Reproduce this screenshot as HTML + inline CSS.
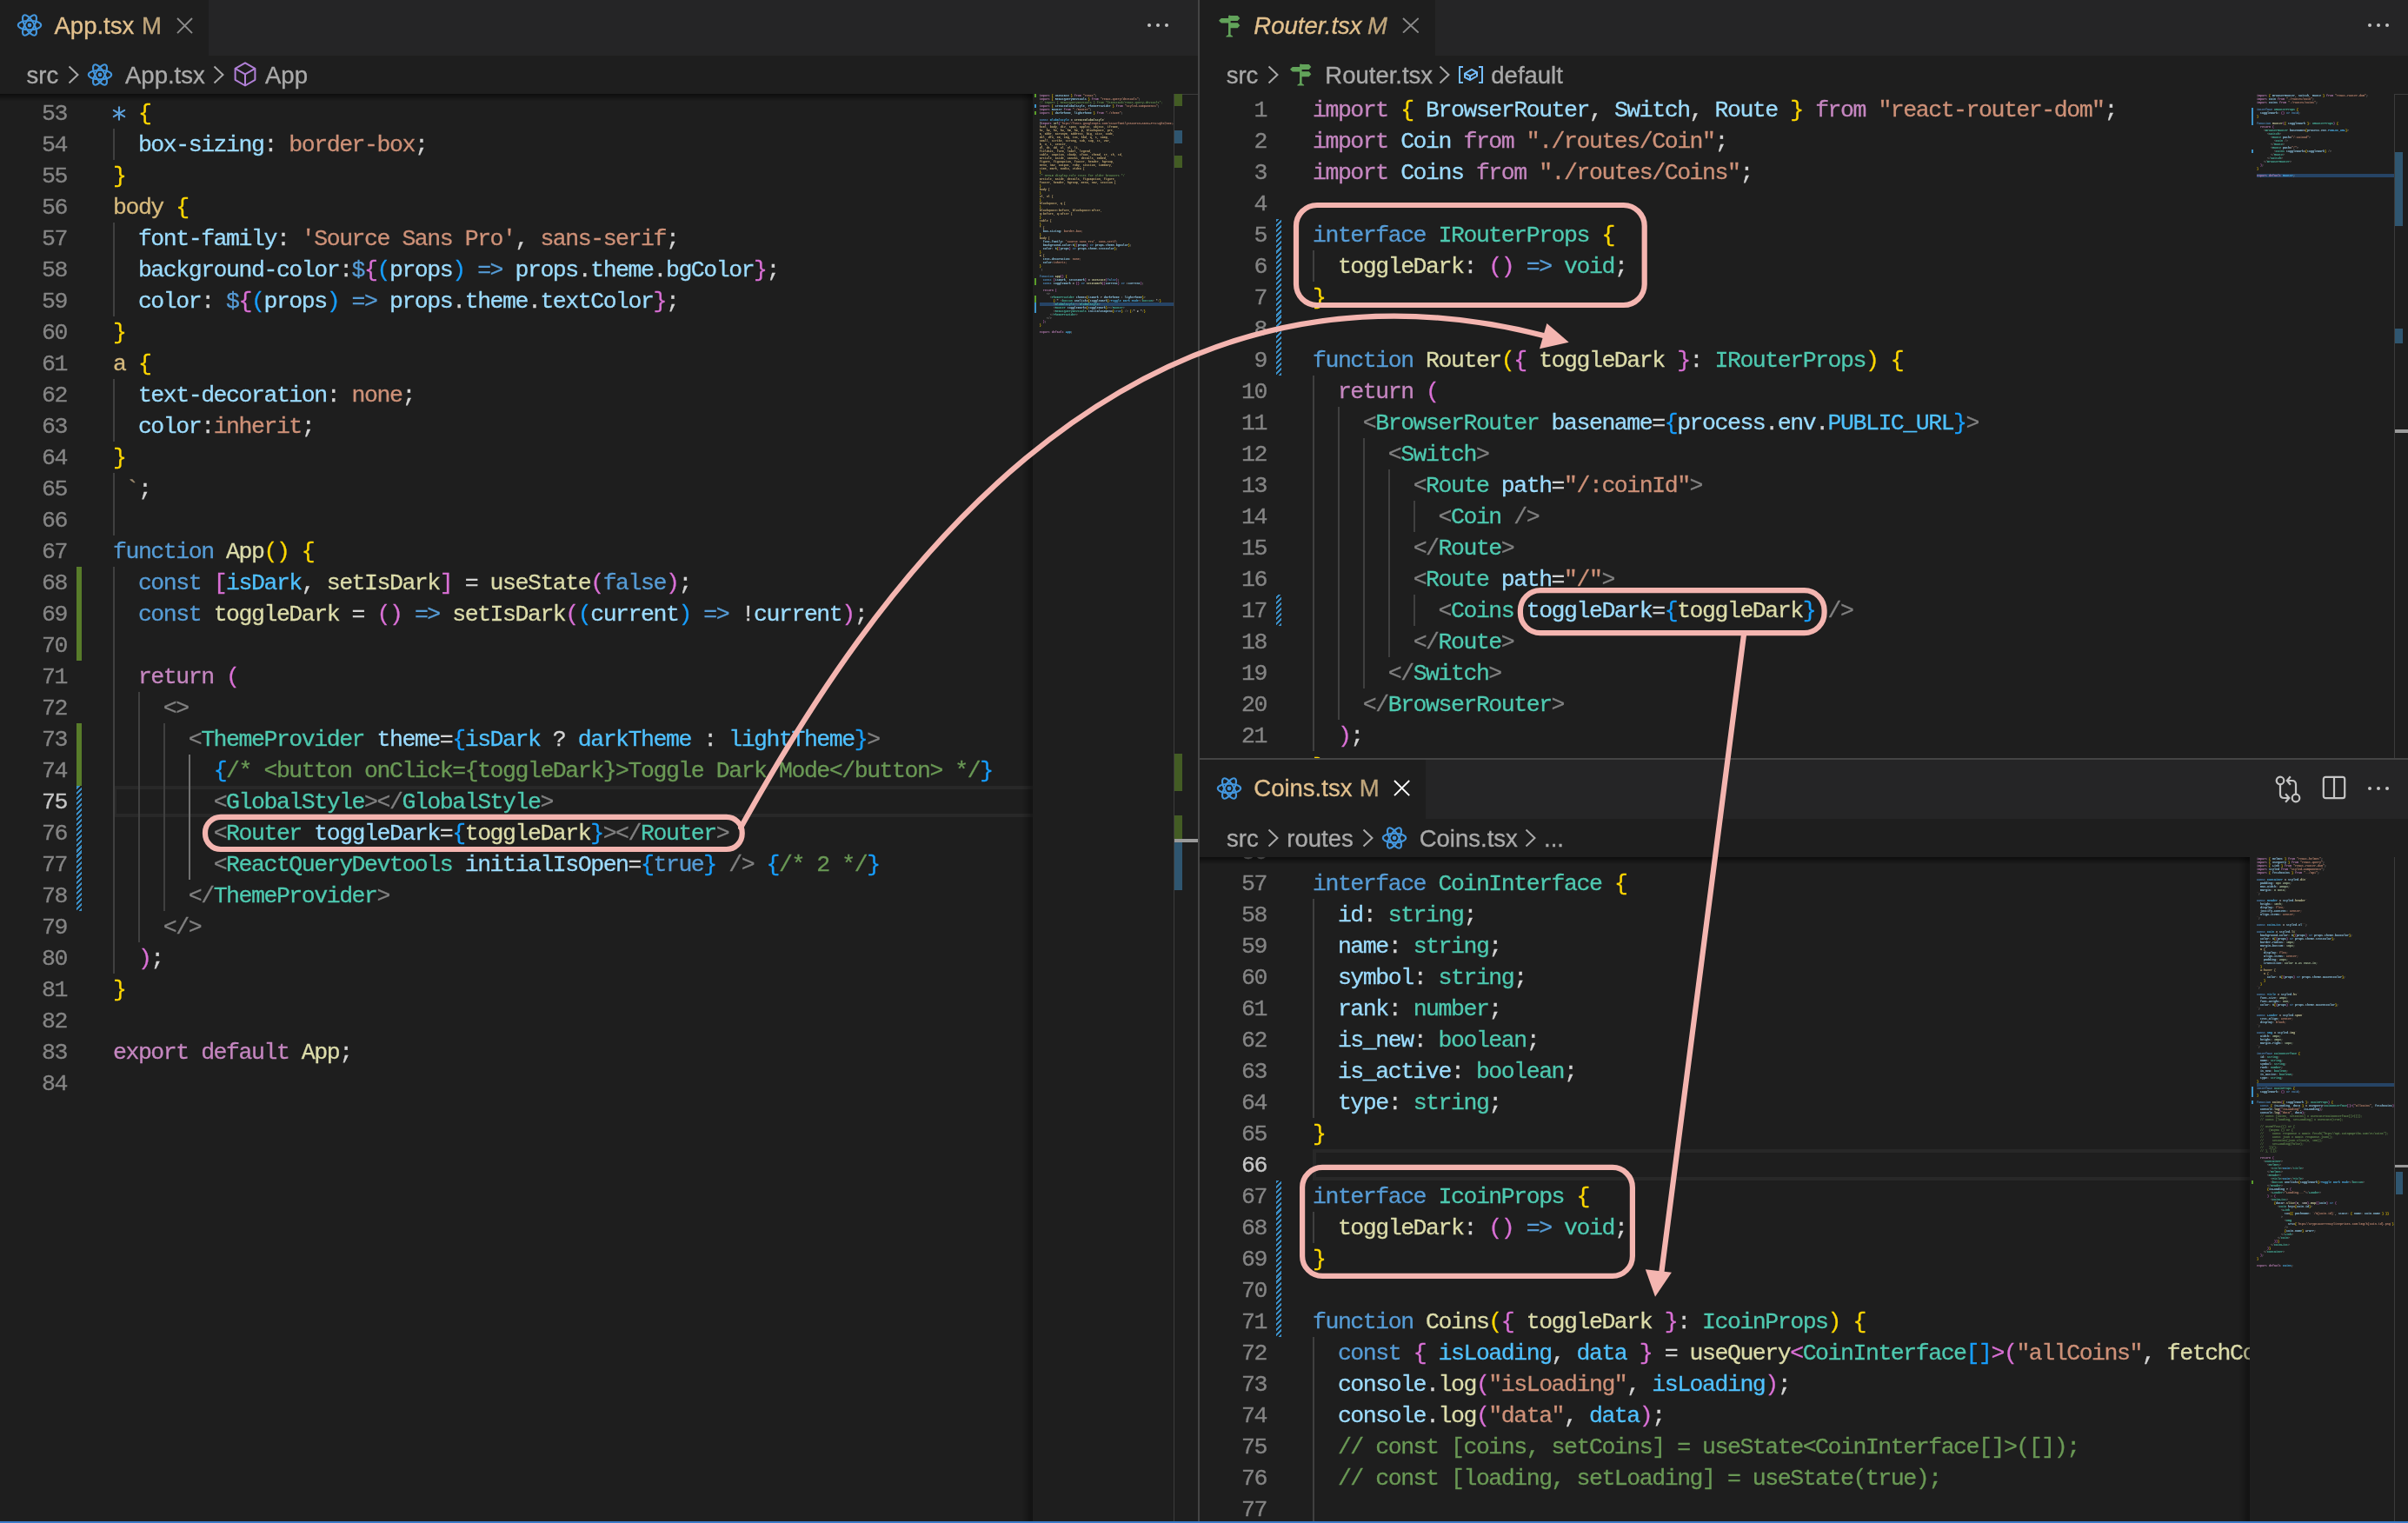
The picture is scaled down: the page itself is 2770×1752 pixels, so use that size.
<!DOCTYPE html><html><head><meta charset="utf-8"><style>
*{margin:0;padding:0;box-sizing:border-box}
html,body{width:2770px;height:1752px;overflow:hidden;background:#1e1e1e}
#root{position:absolute;left:0;top:0;width:2770px;height:1752px;will-change:transform}
body{position:relative;font-family:"Liberation Sans",sans-serif}
.a{position:absolute}
.code{position:absolute;white-space:pre;font-family:"Liberation Mono",monospace;font-size:26.5px;letter-spacing:-1.450px;line-height:36px;height:36px;color:#D4D4D4;margin-top:1px;-webkit-text-stroke:0.3px currentColor}
.num{position:absolute;white-space:pre;font-family:"Liberation Mono",monospace;font-size:26.5px;letter-spacing:-1.450px;line-height:36px;height:36px;color:#858585;text-align:right;width:60px;margin-top:1px;-webkit-text-stroke:0.3px currentColor}
.num.cur{color:#C6C6C6}
i{font-style:normal}
.K{color:#C586C0}.S{color:#569CD6}.F{color:#DCDCAA}.V{color:#9CDCFE}.C{color:#4FC1FF}.T{color:#4EC9B0}
.Q{color:#CE9178}.P{color:#D4D4D4}.G{color:#808080}.M{color:#6A9955}.Y{color:#FFD700}.O{color:#DA70D6}
.B{color:#179FFF}.L{color:#D7BA7D}.W{color:#5DA0DB}.D{color:#9C8A6E}.N{color:#B5CEA8}
.guide{position:absolute;width:2px;background:#404040}
.guide.act{background:#707070}
.hatch{position:absolute;width:6px;background:repeating-linear-gradient(-45deg,#3B8DC4 0 2.2px,rgba(0,0,0,0) 2.2px 4.3px)}
.added{position:absolute;width:6px;background:#587C2A}
.ui{position:absolute;white-space:pre;font-family:"Liberation Sans",sans-serif;font-size:26px;line-height:30px;-webkit-text-stroke:0.35px currentColor}
.crumb{color:#A9A9A9}
.mm{position:absolute;white-space:pre;font-family:"Liberation Mono",monospace;font-size:3.34px;line-height:4px;letter-spacing:0px;font-weight:bold;transform:scaleY(1.2);transform-origin:0 2px;opacity:0.9}
.ast{display:inline-block;transform:translateY(10.5px) scale(1.4)}
.gm{font-weight:bold}
</style></head><body><div id="root"><div class="a" style="left:0px;top:0px;width:1378px;height:64px;background:#252526;"></div>
<div class="a" style="left:0px;top:0px;width:240px;height:64px;background:#1E1E1E;"></div>
<svg class="a" style="left:18px;top:13px" width="32" height="32" viewBox="-16 -16 32 32"><g fill="none" stroke="#4396DD" stroke-width="2.1"><ellipse cx="0" cy="0" rx="13.2" ry="5.2"/><ellipse cx="0" cy="0" rx="13.2" ry="5.2" transform="rotate(60)"/><ellipse cx="0" cy="0" rx="13.2" ry="5.2" transform="rotate(120)"/></g><circle cx="0" cy="0" r="2.4" fill="#4396DD"/></svg>
<div class="ui" style="left:62.5px;top:12.9113px;font-size:27.5px;line-height:34px;color:#E2C08D;">App.tsx</div>
<div class="ui" style="left:163px;top:12.9113px;font-size:27.5px;line-height:34px;color:#BFA57B;">M</div>
<svg class="a" style="left:203px;top:19.5px" width="19" height="19.1"><path d="M1 1 L18 18.1 M18 1 L1 18.1" stroke="#8B8B8B" stroke-width="1.9" fill="none"/></svg>
<div class="a" style="left:1319.8px;top:26.8px;width:4.4px;height:4.4px;border-radius:50%;background:#C5C5C5"></div><div class="a" style="left:1329.8px;top:26.8px;width:4.4px;height:4.4px;border-radius:50%;background:#C5C5C5"></div><div class="a" style="left:1339.8px;top:26.8px;width:4.4px;height:4.4px;border-radius:50%;background:#C5C5C5"></div>
<div class="a" style="left:0px;top:64px;width:1378px;height:44px;background:#1E1E1E;"></div>
<div class="ui" style="left:30.5px;top:69.9112px;font-size:27.5px;line-height:34px;color:#A9A9A9;">src</div>
<svg class="a" style="left:77.5px;top:75.4px" width="14" height="22" viewBox="0 0 14 22"><path d="M1.5 1.5 L11.5 11 L1.5 20.5" fill="none" stroke="#A9A9A9" stroke-width="2"/></svg>
<svg class="a" style="left:99px;top:70px" width="32" height="32" viewBox="-16 -16 32 32"><g fill="none" stroke="#4396DD" stroke-width="2.1"><ellipse cx="0" cy="0" rx="13.2" ry="5.2"/><ellipse cx="0" cy="0" rx="13.2" ry="5.2" transform="rotate(60)"/><ellipse cx="0" cy="0" rx="13.2" ry="5.2" transform="rotate(120)"/></g><circle cx="0" cy="0" r="2.4" fill="#4396DD"/></svg>
<div class="ui" style="left:144px;top:69.9112px;font-size:27.5px;line-height:34px;color:#A9A9A9;">App.tsx</div>
<svg class="a" style="left:245px;top:75.4px" width="14" height="22" viewBox="0 0 14 22"><path d="M1.5 1.5 L11.5 11 L1.5 20.5" fill="none" stroke="#A9A9A9" stroke-width="2"/></svg>
<svg class="a" style="left:269.4px;top:71.1px" width="26" height="29" viewBox="0 0 26 29"><g fill="none" stroke="#B180D7" stroke-width="2" stroke-linejoin="round"><path d="M13 1.3 L24.4 7.8 L24.4 20.8 L13 27.5 L1.6 20.8 L1.6 7.8 Z"/><path d="M1.6 7.8 L13 14.3 L24.4 7.8 M13 14.3 L13 27.5"/></g></svg>
<div class="ui" style="left:305px;top:69.9112px;font-size:27.5px;line-height:34px;color:#A9A9A9;">App</div>
<div class="a" style="left:0px;top:108px;width:1188px;height:1642px;overflow:hidden">
<div class="a" style="left:130px;top:796px;width:1062px;height:36px;border:4px solid #282828"></div>
<div class="added" style="left:88px;top:544px;height:108px"></div>
<div class="added" style="left:88px;top:724px;height:72px"></div>
<div class="hatch" style="left:88px;top:796px;height:144px"></div>
<div class="guide" style="left:130px;top:40px;height:36px"></div>
<div class="guide" style="left:130px;top:148px;height:36px"></div>
<div class="guide" style="left:130px;top:184px;height:36px"></div>
<div class="guide" style="left:130px;top:220px;height:36px"></div>
<div class="guide" style="left:130px;top:328px;height:36px"></div>
<div class="guide" style="left:130px;top:364px;height:36px"></div>
<div class="guide" style="left:130px;top:436px;height:36px"></div>
<div class="guide" style="left:130px;top:472px;height:36px"></div>
<div class="guide" style="left:130px;top:544px;height:36px"></div>
<div class="guide" style="left:130px;top:580px;height:36px"></div>
<div class="guide" style="left:130px;top:616px;height:36px"></div>
<div class="guide" style="left:130px;top:652px;height:36px"></div>
<div class="guide" style="left:130px;top:688px;height:36px"></div>
<div class="guide" style="left:158.9px;top:688px;height:36px"></div>
<div class="guide" style="left:130px;top:724px;height:36px"></div>
<div class="guide" style="left:158.9px;top:724px;height:36px"></div>
<div class="guide" style="left:187.8px;top:724px;height:36px"></div>
<div class="guide" style="left:130px;top:760px;height:36px"></div>
<div class="guide" style="left:158.9px;top:760px;height:36px"></div>
<div class="guide" style="left:187.8px;top:760px;height:36px"></div>
<div class="guide act" style="left:216.7px;top:760px;height:36px"></div>
<div class="guide" style="left:130px;top:796px;height:36px"></div>
<div class="guide" style="left:158.9px;top:796px;height:36px"></div>
<div class="guide" style="left:187.8px;top:796px;height:36px"></div>
<div class="guide act" style="left:216.7px;top:796px;height:36px"></div>
<div class="guide" style="left:130px;top:832px;height:36px"></div>
<div class="guide" style="left:158.9px;top:832px;height:36px"></div>
<div class="guide" style="left:187.8px;top:832px;height:36px"></div>
<div class="guide act" style="left:216.7px;top:832px;height:36px"></div>
<div class="guide" style="left:130px;top:868px;height:36px"></div>
<div class="guide" style="left:158.9px;top:868px;height:36px"></div>
<div class="guide" style="left:187.8px;top:868px;height:36px"></div>
<div class="guide act" style="left:216.7px;top:868px;height:36px"></div>
<div class="guide" style="left:130px;top:904px;height:36px"></div>
<div class="guide" style="left:158.9px;top:904px;height:36px"></div>
<div class="guide" style="left:187.8px;top:904px;height:36px"></div>
<div class="guide" style="left:130px;top:940px;height:36px"></div>
<div class="guide" style="left:158.9px;top:940px;height:36px"></div>
<div class="guide" style="left:130px;top:976px;height:36px"></div>
<div class="num" style="left:17px;top:4px">53</div>
<div class="code" style="left:130px;top:4px"><i class="P">  </i><i class="Y">{</i></div>
<div class="num" style="left:17px;top:40px">54</div>
<div class="code" style="left:130px;top:40px">  <i class="V">box-sizing</i><i class="P">: </i><i class="Q">border-box</i><i class="P">;</i></div>
<div class="num" style="left:17px;top:76px">55</div>
<div class="code" style="left:130px;top:76px"><i class="Y">}</i></div>
<div class="num" style="left:17px;top:112px">56</div>
<div class="code" style="left:130px;top:112px"><i class="L">body</i><i class="P"> </i><i class="Y">{</i></div>
<div class="num" style="left:17px;top:148px">57</div>
<div class="code" style="left:130px;top:148px">  <i class="V">font-family</i><i class="P">: </i><i class="Q">&#x27;Source Sans Pro&#x27;</i><i class="P">, </i><i class="Q">sans-serif</i><i class="P">;</i></div>
<div class="num" style="left:17px;top:184px">58</div>
<div class="code" style="left:130px;top:184px">  <i class="V">background-color</i><i class="P">:</i><i class="S">$</i><i class="O">{</i><i class="B">(</i><i class="V">props</i><i class="B">)</i><i class="P"> </i><i class="S">=&gt;</i><i class="P"> </i><i class="V">props</i><i class="P">.</i><i class="V">theme</i><i class="P">.</i><i class="V">bgColor</i><i class="O">}</i><i class="P">;</i></div>
<div class="num" style="left:17px;top:220px">59</div>
<div class="code" style="left:130px;top:220px">  <i class="V">color</i><i class="P">: </i><i class="S">$</i><i class="O">{</i><i class="B">(</i><i class="V">props</i><i class="B">)</i><i class="P"> </i><i class="S">=&gt;</i><i class="P"> </i><i class="V">props</i><i class="P">.</i><i class="V">theme</i><i class="P">.</i><i class="V">textColor</i><i class="O">}</i><i class="P">;</i></div>
<div class="num" style="left:17px;top:256px">60</div>
<div class="code" style="left:130px;top:256px"><i class="Y">}</i></div>
<div class="num" style="left:17px;top:292px">61</div>
<div class="code" style="left:130px;top:292px"><i class="L">a</i><i class="P"> </i><i class="Y">{</i></div>
<div class="num" style="left:17px;top:328px">62</div>
<div class="code" style="left:130px;top:328px">  <i class="V">text-decoration</i><i class="P">: </i><i class="Q">none</i><i class="P">;</i></div>
<div class="num" style="left:17px;top:364px">63</div>
<div class="code" style="left:130px;top:364px">  <i class="V">color</i><i class="P">:</i><i class="Q">inherit</i><i class="P">;</i></div>
<div class="num" style="left:17px;top:400px">64</div>
<div class="code" style="left:130px;top:400px"><i class="Y">}</i></div>
<div class="num" style="left:17px;top:436px">65</div>
<div class="code" style="left:130px;top:436px"> <i class="D">`</i><i class="P">;</i></div>
<div class="num" style="left:17px;top:472px">66</div>
<div class="num" style="left:17px;top:508px">67</div>
<div class="code" style="left:130px;top:508px"><i class="S">function</i><i class="P"> </i><i class="F">App</i><i class="Y">()</i><i class="P"> </i><i class="Y">{</i></div>
<div class="num" style="left:17px;top:544px">68</div>
<div class="code" style="left:130px;top:544px">  <i class="S">const</i><i class="P"> </i><i class="O">[</i><i class="C">isDark</i><i class="P">, </i><i class="F">setIsDark</i><i class="O">]</i><i class="P"> = </i><i class="F">useState</i><i class="O">(</i><i class="S">false</i><i class="O">)</i><i class="P">;</i></div>
<div class="num" style="left:17px;top:580px">69</div>
<div class="code" style="left:130px;top:580px">  <i class="S">const</i><i class="P"> </i><i class="F">toggleDark</i><i class="P"> = </i><i class="O">()</i><i class="P"> </i><i class="S">=&gt;</i><i class="P"> </i><i class="F">setIsDark</i><i class="O">(</i><i class="B">(</i><i class="V">current</i><i class="B">)</i><i class="P"> </i><i class="S">=&gt;</i><i class="P"> !</i><i class="V">current</i><i class="O">)</i><i class="P">;</i></div>
<div class="num" style="left:17px;top:616px">70</div>
<div class="num" style="left:17px;top:652px">71</div>
<div class="code" style="left:130px;top:652px">  <i class="K">return</i><i class="P"> </i><i class="O">(</i></div>
<div class="num" style="left:17px;top:688px">72</div>
<div class="code" style="left:130px;top:688px">    <i class="G">&lt;&gt;</i></div>
<div class="num" style="left:17px;top:724px">73</div>
<div class="code" style="left:130px;top:724px">      <i class="G">&lt;</i><i class="T">ThemeProvider</i><i class="P"> </i><i class="V">theme</i><i class="P">=</i><i class="B">{</i><i class="C">isDark</i><i class="P"> ? </i><i class="C">darkTheme</i><i class="P"> : </i><i class="C">lightTheme</i><i class="B">}</i><i class="G">&gt;</i></div>
<div class="num" style="left:17px;top:760px">74</div>
<div class="code" style="left:130px;top:760px">        <i class="B">{</i><i class="M">/* &lt;button onClick={toggleDark}&gt;Toggle Dark Mode&lt;/button&gt; */</i><i class="B">}</i></div>
<div class="num cur" style="left:17px;top:796px">75</div>
<div class="code" style="left:130px;top:796px">        <i class="G">&lt;</i><i class="T">GlobalStyle</i><i class="G">&gt;&lt;/</i><i class="T">GlobalStyle</i><i class="G">&gt;</i></div>
<div class="num" style="left:17px;top:832px">76</div>
<div class="code" style="left:130px;top:832px">        <i class="G">&lt;</i><i class="T">Router</i><i class="P"> </i><i class="V">toggleDark</i><i class="P">=</i><i class="B">{</i><i class="F">toggleDark</i><i class="B">}</i><i class="G">&gt;&lt;/</i><i class="T">Router</i><i class="G">&gt;</i></div>
<div class="num" style="left:17px;top:868px">77</div>
<div class="code" style="left:130px;top:868px">        <i class="G">&lt;</i><i class="T">ReactQueryDevtools</i><i class="P"> </i><i class="V">initialIsOpen</i><i class="P">=</i><i class="B">{</i><i class="S">true</i><i class="B">}</i><i class="P"> </i><i class="G">/&gt;</i><i class="P"> </i><i class="B">{</i><i class="M">/* 2 */</i><i class="B">}</i></div>
<div class="num" style="left:17px;top:904px">78</div>
<div class="code" style="left:130px;top:904px">      <i class="G">&lt;/</i><i class="T">ThemeProvider</i><i class="G">&gt;</i></div>
<div class="num" style="left:17px;top:940px">79</div>
<div class="code" style="left:130px;top:940px">    <i class="G">&lt;/&gt;</i></div>
<div class="num" style="left:17px;top:976px">80</div>
<div class="code" style="left:130px;top:976px">  <i class="O">)</i><i class="P">;</i></div>
<div class="num" style="left:17px;top:1012px">81</div>
<div class="code" style="left:130px;top:1012px"><i class="Y">}</i></div>
<div class="num" style="left:17px;top:1048px">82</div>
<div class="num" style="left:17px;top:1084px">83</div>
<div class="code" style="left:130px;top:1084px"><i class="K">export</i><i class="P"> </i><i class="K">default</i><i class="P"> </i><i class="F">App</i><i class="P">;</i></div>
<div class="num" style="left:17px;top:1120px">84</div>
</div>
<svg class="a" style="left:128px;top:121px" width="18" height="19" viewBox="0 0 18 19"><g stroke="#5DA0DB" stroke-width="2.1" stroke-linecap="round"><path d="M9 2.3 L9 16.7"/><path d="M2.8 5.8 L15.2 13.2"/><path d="M2.8 13.2 L15.2 5.8"/></g></svg>
<div class="a" style="left:0px;top:108px;width:1188px;height:8px;background:linear-gradient(rgba(0,0,0,0.55),rgba(0,0,0,0));"></div>
<div class="a" style="left:1176px;top:108px;width:12px;height:1642px;background:linear-gradient(90deg,rgba(0,0,0,0),rgba(0,0,0,0.38));"></div>
<div class="a" style="left:1196px;top:348px;width:154px;height:4px;background:#264466;"></div>
<div class="a" style="left:1190px;top:108px;width:2.3px;height:4px;background:#5A9E2A;"></div>
<div class="a" style="left:1190px;top:120px;width:2.3px;height:4px;background:#3C93C9;"></div>
<div class="a" style="left:1190px;top:128px;width:2.3px;height:4px;background:#5A9E2A;"></div>
<div class="a" style="left:1190px;top:320px;width:2.3px;height:8px;background:#5A9E2A;"></div>
<div class="a" style="left:1190px;top:340px;width:2.3px;height:8px;background:#5A9E2A;"></div>
<div class="a" style="left:1190px;top:348px;width:2.3px;height:12px;background:#3C93C9;"></div>
<div class="a" style="left:1195.8px;top:108px;width:154px;height:278px;overflow:hidden">
<div class="mm" style="left:0;top:0px"><i class="K">import </i><i class="Y">{ </i><i class="V">useState </i><i class="Y">} </i><i class="K">from </i><i class="Q">&quot;react&quot;</i><i class="P">;</i></div>
<div class="mm" style="left:0;top:4px"><i class="K">import </i><i class="Y">{ </i><i class="V">ReactQueryDevtools </i><i class="Y">} </i><i class="K">from </i><i class="Q">&quot;react-query/devtools&quot;</i><i class="P">;</i></div>
<div class="mm" style="left:0;top:8px"><i class="M">// import { ReactQueryDevtools } from &quot;@tanstack/react-query-devtools&quot;;</i></div>
<div class="mm" style="left:0;top:12px"><i class="K">import </i><i class="Y">{ </i><i class="V">createGlobalStyle</i><i class="P">, </i><i class="V">ThemeProvider </i><i class="Y">} </i><i class="K">from </i><i class="Q">&quot;styled-components&quot;</i><i class="P">;</i></div>
<div class="mm" style="left:0;top:16px"><i class="K">import </i><i class="V">Router </i><i class="K">from </i><i class="Q">&quot;./Router&quot;</i><i class="P">;</i></div>
<div class="mm" style="left:0;top:20px"><i class="K">import </i><i class="Y">{ </i><i class="V">darkTheme</i><i class="P">, </i><i class="V">lightTheme </i><i class="Y">} </i><i class="K">from </i><i class="Q">&quot;./theme&quot;</i><i class="P">;</i></div>
<div class="mm" style="left:0;top:28px"><i class="S">const </i><i class="C">GlobalStyle </i><i class="P">= </i><i class="F">createGlobalStyle</i><i class="Q">`</i></div>
<div class="mm" style="left:0;top:32px"><i class="P">@</i><i class="K">import </i><i class="F">url</i><i class="O">(</i><i class="Q">&#x27;htps//fonts.googleapis.com/css2?family=Source+Sans+Pro:wght@300;400&amp;display=swap&#x27;</i><i class="O">)</i><i class="P">;</i></div>
<div class="mm" style="left:0;top:36px"><i class="L">html, body, div, span, applet, object, iframe,</i></div>
<div class="mm" style="left:0;top:40px"><i class="L">h1, h2, h3, h4, h5, h6, p, blockquote, pre,</i></div>
<div class="mm" style="left:0;top:44px"><i class="L">a, abbr, acronym, address, big, cite, code,</i></div>
<div class="mm" style="left:0;top:48px"><i class="L">del, dfn, em, img, ins, kbd, q, s, samp,</i></div>
<div class="mm" style="left:0;top:52px"><i class="L">small, strike, strong, sub, sup, tt, var,</i></div>
<div class="mm" style="left:0;top:56px"><i class="L">b, u, i, center,</i></div>
<div class="mm" style="left:0;top:60px"><i class="L">dl, dt, dd, ol, ul, li,</i></div>
<div class="mm" style="left:0;top:64px"><i class="L">fieldset, form, label, legend,</i></div>
<div class="mm" style="left:0;top:68px"><i class="L">table, caption, tbody, tfoot, thead, tr, th, td,</i></div>
<div class="mm" style="left:0;top:72px"><i class="L">article, aside, canvas, details, embed,</i></div>
<div class="mm" style="left:0;top:76px"><i class="L">figure, figcaption, footer, header, hgroup,</i></div>
<div class="mm" style="left:0;top:80px"><i class="L">menu, nav, output, ruby, section, summary,</i></div>
<div class="mm" style="left:0;top:84px"><i class="L">time, mark, audio, video {</i></div>
<div class="mm" style="left:0;top:88px"><i class="Y">}</i></div>
<div class="mm" style="left:0;top:92px"><i class="M">/* HTML5 display-role reset for older browsers */</i></div>
<div class="mm" style="left:0;top:96px"><i class="L">article, aside, details, figcaption, figure,</i></div>
<div class="mm" style="left:0;top:100px"><i class="L">footer, header, hgroup, menu, nav, section {</i></div>
<div class="mm" style="left:0;top:104px"><i class="Y">}</i></div>
<div class="mm" style="left:0;top:108px"><i class="L">body {</i></div>
<div class="mm" style="left:0;top:112px"><i class="Y">}</i></div>
<div class="mm" style="left:0;top:116px"><i class="L">ol, ul {</i></div>
<div class="mm" style="left:0;top:120px"><i class="Y">}</i></div>
<div class="mm" style="left:0;top:124px"><i class="L">blockquote, q {</i></div>
<div class="mm" style="left:0;top:128px"><i class="Y">}</i></div>
<div class="mm" style="left:0;top:132px"><i class="L">blockquote:before, blockquote:after,</i></div>
<div class="mm" style="left:0;top:136px"><i class="L">q:before, q:after {</i></div>
<div class="mm" style="left:0;top:140px"><i class="Y">}</i></div>
<div class="mm" style="left:0;top:144px"><i class="L">table {</i></div>
<div class="mm" style="left:0;top:148px"><i class="Y">}</i></div>
<div class="mm" style="left:0;top:152px"><i class="L">* {</i></div>
<div class="mm" style="left:0;top:156px">  <i class="V">box-sizing</i><i class="P">:</i><i class="Q"> border-box;</i></div>
<div class="mm" style="left:0;top:160px"><i class="Y">}</i></div>
<div class="mm" style="left:0;top:164px"><i class="L">body {</i></div>
<div class="mm" style="left:0;top:168px">  <i class="V">font-family</i><i class="P">:</i><i class="Q"> &#x27;Source Sans Pro&#x27;, sans-serif;</i></div>
<div class="mm" style="left:0;top:172px">  <i class="V">background-color</i><i class="P">:</i><i class="V">$</i><i class="Y">{</i><i class="O">(</i><i class="V">props</i><i class="O">) </i><i class="S">=&gt; </i><i class="V">props</i><i class="P">.</i><i class="V">theme</i><i class="P">.</i><i class="V">bgColor</i><i class="Y">}</i><i class="P">;</i></div>
<div class="mm" style="left:0;top:176px">  <i class="V">color</i><i class="P">: </i><i class="V">$</i><i class="Y">{</i><i class="O">(</i><i class="V">props</i><i class="O">) </i><i class="S">=&gt; </i><i class="V">props</i><i class="P">.</i><i class="V">theme</i><i class="P">.</i><i class="V">textColor</i><i class="Y">}</i><i class="P">;</i></div>
<div class="mm" style="left:0;top:180px"><i class="Y">}</i></div>
<div class="mm" style="left:0;top:184px"><i class="L">a {</i></div>
<div class="mm" style="left:0;top:188px">  <i class="V">text-decoration</i><i class="P">:</i><i class="Q"> none;</i></div>
<div class="mm" style="left:0;top:192px">  <i class="V">color</i><i class="P">:</i><i class="Q">inherit;</i></div>
<div class="mm" style="left:0;top:196px"><i class="Y">}</i></div>
<div class="mm" style="left:0;top:200px"><i class="Q">`</i><i class="P">;</i></div>
<div class="mm" style="left:0;top:208px"><i class="S">function </i><i class="F">App</i><i class="O">(</i><i class="O">) </i><i class="Y">{</i></div>
<div class="mm" style="left:0;top:212px">  <i class="S">const </i><i class="O">[</i><i class="V">isDark</i><i class="P">, </i><i class="V">setIsDark</i><i class="O">] </i><i class="P">= </i><i class="F">useState</i><i class="O">(</i><i class="S">false</i><i class="O">)</i><i class="P">;</i></div>
<div class="mm" style="left:0;top:216px">  <i class="S">const </i><i class="V">toggleDark </i><i class="P">= </i><i class="O">(</i><i class="O">) </i><i class="S">=&gt; </i><i class="F">setIsDark</i><i class="O">(</i><i class="O">(</i><i class="V">current</i><i class="O">) </i><i class="S">=&gt; </i><i class="P">!</i><i class="V">current</i><i class="O">)</i><i class="P">;</i></div>
<div class="mm" style="left:0;top:224px">  <i class="K">return </i><i class="O">(</i></div>
<div class="mm" style="left:0;top:228px">    <i class="G">&lt;</i><i class="G">&gt;</i></div>
<div class="mm" style="left:0;top:232px">      <i class="G">&lt;</i><i class="T">ThemeProvider </i><i class="V">theme</i><i class="P">=</i><i class="Y">{</i><i class="V">isDark </i><i class="P">? </i><i class="V">darkTheme </i><i class="P">: </i><i class="V">lightTheme</i><i class="Y">}</i><i class="G">&gt;</i></div>
<div class="mm" style="left:0;top:236px">        <i class="Y">{</i><i class="G">/</i><i class="P">* </i><i class="G">&lt;</i><i class="T">button </i><i class="V">onClick</i><i class="P">=</i><i class="Y">{</i><i class="V">toggleDark</i><i class="Y">}</i><i class="G">&gt;</i><i class="C">Toggle </i><i class="C">Dark </i><i class="C">Mode</i><i class="G">&lt;</i><i class="G">/</i><i class="T">button</i><i class="G">&gt; </i><i class="P">*</i><i class="G">/</i><i class="Y">}</i></div>
<div class="mm" style="left:0;top:240px">        <i class="G">&lt;</i><i class="T">GlobalStyle</i><i class="G">&gt;</i><i class="G">&lt;</i><i class="G">/</i><i class="T">GlobalStyle</i><i class="G">&gt;</i></div>
<div class="mm" style="left:0;top:244px">        <i class="G">&lt;</i><i class="T">Router </i><i class="V">toggleDark</i><i class="P">=</i><i class="Y">{</i><i class="V">toggleDark</i><i class="Y">}</i><i class="G">&gt;</i><i class="G">&lt;</i><i class="G">/</i><i class="T">Router</i><i class="G">&gt;</i></div>
<div class="mm" style="left:0;top:248px">        <i class="G">&lt;</i><i class="T">ReactQueryDevtools </i><i class="V">initialIsOpen</i><i class="P">=</i><i class="Y">{</i><i class="S">true</i><i class="Y">} </i><i class="G">/</i><i class="G">&gt; </i><i class="Y">{</i><i class="G">/</i><i class="P">* </i><i class="P">2 </i><i class="P">*</i><i class="G">/</i><i class="Y">}</i></div>
<div class="mm" style="left:0;top:252px">      <i class="G">&lt;</i><i class="G">/</i><i class="T">ThemeProvider</i><i class="G">&gt;</i></div>
<div class="mm" style="left:0;top:256px">    <i class="G">&lt;</i><i class="G">/</i><i class="G">&gt;</i></div>
<div class="mm" style="left:0;top:260px">  <i class="O">)</i><i class="P">;</i></div>
<div class="mm" style="left:0;top:264px"><i class="Y">}</i></div>
<div class="mm" style="left:0;top:272px"><i class="K">export </i><i class="K">default </i><i class="C">App</i><i class="P">;</i></div>
</div>
<div class="a" style="left:1350px;top:108px;width:1px;height:1642px;background:#3C3C3C;"></div>
<div class="a" style="left:1350px;top:108px;width:28px;height:1px;background:#3C3C3C;"></div>
<div class="a" style="left:1351px;top:108px;width:9px;height:13.7px;background:#435C24;"></div>
<div class="a" style="left:1351px;top:150.2px;width:9px;height:14.8px;background:#2F5670;"></div>
<div class="a" style="left:1351px;top:178.8px;width:9px;height:13.8px;background:#435C24;"></div>
<div class="a" style="left:1351px;top:866.9px;width:9px;height:43.1px;background:#435C24;"></div>
<div class="a" style="left:1351px;top:937.8px;width:9px;height:26.9px;background:#435C24;"></div>
<div class="a" style="left:1351px;top:968.9px;width:9px;height:54.8px;background:#2F5670;"></div>
<div class="a" style="left:1351px;top:964.7px;width:27px;height:4.2px;background:#9A9A9A;"></div>
<div class="a" style="left:1378px;top:0px;width:2px;height:1752px;background:#444444;"></div>
<div class="a" style="left:1380px;top:0px;width:1390px;height:64px;background:#252526;"></div>
<div class="a" style="left:1380px;top:0px;width:271px;height:64px;background:#1E1E1E;"></div>
<svg class="a" style="left:1401.8px;top:16.3px" width="26" height="28" viewBox="0 0 26 28"><g fill="#62A35A"><path d="M11.1 2.2 Q12.35 0.6 13.6 2.2 L13.6 24 L16 25.5 L16.2 26.6 L8.3 26.6 L8.5 25.5 L11 24 Z"/><path d="M0 7.7 L2.8 5 L12.2 5 L12.2 10.5 L2.8 10.5 Z"/><path d="M12.2 2.1 L21.7 2.1 L24.3 5.1 L21.7 8.1 L12.2 8.1 Z"/><path d="M12.2 10.2 L21.7 10.2 L24.3 13.2 L21.7 16.2 L12.2 16.2 Z"/></g></svg>
<div class="ui" style="left:1442.3px;top:12.9113px;font-size:27.5px;line-height:34px;color:#E2C08D;font-style:italic;">Router.tsx</div>
<div class="ui" style="left:1573px;top:12.9113px;font-size:27.5px;line-height:34px;color:#BFA57B;font-style:italic;">M</div>
<svg class="a" style="left:1612.6px;top:19.8px" width="19.7" height="18.6"><path d="M1 1 L18.7 17.6 M18.7 1 L1 17.6" stroke="#8B8B8B" stroke-width="1.9" fill="none"/></svg>
<div class="a" style="left:2723.8px;top:26.8px;width:4.4px;height:4.4px;border-radius:50%;background:#C5C5C5"></div><div class="a" style="left:2733.8px;top:26.8px;width:4.4px;height:4.4px;border-radius:50%;background:#C5C5C5"></div><div class="a" style="left:2743.8px;top:26.8px;width:4.4px;height:4.4px;border-radius:50%;background:#C5C5C5"></div>
<div class="a" style="left:1380px;top:64px;width:1390px;height:44px;background:#1E1E1E;"></div>
<div class="ui" style="left:1410.7px;top:69.9112px;font-size:27.5px;line-height:34px;color:#A9A9A9;">src</div>
<svg class="a" style="left:1458px;top:75.4px" width="14" height="22" viewBox="0 0 14 22"><path d="M1.5 1.5 L11.5 11 L1.5 20.5" fill="none" stroke="#A9A9A9" stroke-width="2"/></svg>
<svg class="a" style="left:1483.8px;top:72px" width="26" height="28" viewBox="0 0 26 28"><g fill="#62A35A"><path d="M11.1 2.2 Q12.35 0.6 13.6 2.2 L13.6 24 L16 25.5 L16.2 26.6 L8.3 26.6 L8.5 25.5 L11 24 Z"/><path d="M0 7.7 L2.8 5 L12.2 5 L12.2 10.5 L2.8 10.5 Z"/><path d="M12.2 2.1 L21.7 2.1 L24.3 5.1 L21.7 8.1 L12.2 8.1 Z"/><path d="M12.2 10.2 L21.7 10.2 L24.3 13.2 L21.7 16.2 L12.2 16.2 Z"/></g></svg>
<div class="ui" style="left:1524.3px;top:69.9112px;font-size:27.5px;line-height:34px;color:#A9A9A9;">Router.tsx</div>
<svg class="a" style="left:1655px;top:75.4px" width="14" height="22" viewBox="0 0 14 22"><path d="M1.5 1.5 L11.5 11 L1.5 20.5" fill="none" stroke="#A9A9A9" stroke-width="2"/></svg>
<svg class="a" style="left:1677px;top:75px" width="30" height="22" viewBox="0 0 30 22"><g fill="none" stroke="#75BEFF" stroke-width="2"><path d="M6 2 L2 2 L2 20 L6 20"/><path d="M24 2 L28 2 L28 20 L24 20"/><path d="M8 9.5 L16 5 L22 8 L22 12.5 L14 17 L8 14 Z M8 9.5 L14 12.5 L22 8 M14 12.5 L14 17"/></g></svg>
<div class="ui" style="left:1715.3px;top:69.9112px;font-size:27.5px;line-height:34px;color:#A9A9A9;">default</div>
<div class="a" style="left:1380px;top:108px;width:1208px;height:764px;overflow:hidden">
<div class="hatch" style="left:88px;top:144px;height:180px"></div>
<div class="hatch" style="left:88px;top:576px;height:36px"></div>
<div class="guide" style="left:130px;top:180px;height:36px"></div>
<div class="guide" style="left:130px;top:324px;height:36px"></div>
<div class="guide" style="left:130px;top:360px;height:36px"></div>
<div class="guide" style="left:158.9px;top:360px;height:36px"></div>
<div class="guide" style="left:130px;top:396px;height:36px"></div>
<div class="guide" style="left:158.9px;top:396px;height:36px"></div>
<div class="guide" style="left:187.8px;top:396px;height:36px"></div>
<div class="guide" style="left:130px;top:432px;height:36px"></div>
<div class="guide" style="left:158.9px;top:432px;height:36px"></div>
<div class="guide" style="left:187.8px;top:432px;height:36px"></div>
<div class="guide" style="left:216.7px;top:432px;height:36px"></div>
<div class="guide" style="left:130px;top:468px;height:36px"></div>
<div class="guide" style="left:158.9px;top:468px;height:36px"></div>
<div class="guide" style="left:187.8px;top:468px;height:36px"></div>
<div class="guide" style="left:216.7px;top:468px;height:36px"></div>
<div class="guide" style="left:245.6px;top:468px;height:36px"></div>
<div class="guide" style="left:130px;top:504px;height:36px"></div>
<div class="guide" style="left:158.9px;top:504px;height:36px"></div>
<div class="guide" style="left:187.8px;top:504px;height:36px"></div>
<div class="guide" style="left:216.7px;top:504px;height:36px"></div>
<div class="guide" style="left:130px;top:540px;height:36px"></div>
<div class="guide" style="left:158.9px;top:540px;height:36px"></div>
<div class="guide" style="left:187.8px;top:540px;height:36px"></div>
<div class="guide" style="left:216.7px;top:540px;height:36px"></div>
<div class="guide" style="left:130px;top:576px;height:36px"></div>
<div class="guide" style="left:158.9px;top:576px;height:36px"></div>
<div class="guide" style="left:187.8px;top:576px;height:36px"></div>
<div class="guide" style="left:216.7px;top:576px;height:36px"></div>
<div class="guide" style="left:245.6px;top:576px;height:36px"></div>
<div class="guide" style="left:130px;top:612px;height:36px"></div>
<div class="guide" style="left:158.9px;top:612px;height:36px"></div>
<div class="guide" style="left:187.8px;top:612px;height:36px"></div>
<div class="guide" style="left:216.7px;top:612px;height:36px"></div>
<div class="guide" style="left:130px;top:648px;height:36px"></div>
<div class="guide" style="left:158.9px;top:648px;height:36px"></div>
<div class="guide" style="left:187.8px;top:648px;height:36px"></div>
<div class="guide" style="left:130px;top:684px;height:36px"></div>
<div class="guide" style="left:158.9px;top:684px;height:36px"></div>
<div class="guide" style="left:130px;top:720px;height:36px"></div>
<div class="num" style="left:17px;top:0px">1</div>
<div class="code" style="left:130px;top:0px"><i class="K">import</i><i class="P"> </i><i class="Y">{</i><i class="P"> </i><i class="V">BrowserRouter</i><i class="P">, </i><i class="V">Switch</i><i class="P">, </i><i class="V">Route</i><i class="P"> </i><i class="Y">}</i><i class="P"> </i><i class="K">from</i><i class="P"> </i><i class="Q">&quot;react-router-dom&quot;</i><i class="P">;</i></div>
<div class="num" style="left:17px;top:36px">2</div>
<div class="code" style="left:130px;top:36px"><i class="K">import</i><i class="P"> </i><i class="V">Coin</i><i class="P"> </i><i class="K">from</i><i class="P"> </i><i class="Q">&quot;./routes/Coin&quot;</i><i class="P">;</i></div>
<div class="num" style="left:17px;top:72px">3</div>
<div class="code" style="left:130px;top:72px"><i class="K">import</i><i class="P"> </i><i class="V">Coins</i><i class="P"> </i><i class="K">from</i><i class="P"> </i><i class="Q">&quot;./routes/Coins&quot;</i><i class="P">;</i></div>
<div class="num" style="left:17px;top:108px">4</div>
<div class="num" style="left:17px;top:144px">5</div>
<div class="code" style="left:130px;top:144px"><i class="S">interface</i><i class="P"> </i><i class="T">IRouterProps</i><i class="P"> </i><i class="Y">{</i></div>
<div class="num" style="left:17px;top:180px">6</div>
<div class="code" style="left:130px;top:180px">  <i class="F">toggleDark</i><i class="P">: </i><i class="O">()</i><i class="P"> </i><i class="S">=&gt;</i><i class="P"> </i><i class="T">void</i><i class="P">;</i></div>
<div class="num" style="left:17px;top:216px">7</div>
<div class="code" style="left:130px;top:216px"><i class="Y">}</i></div>
<div class="num" style="left:17px;top:252px">8</div>
<div class="num" style="left:17px;top:288px">9</div>
<div class="code" style="left:130px;top:288px"><i class="S">function</i><i class="P"> </i><i class="F">Router</i><i class="Y">(</i><i class="O">{</i><i class="P"> </i><i class="F">toggleDark</i><i class="P"> </i><i class="O">}</i><i class="P">: </i><i class="T">IRouterProps</i><i class="Y">)</i><i class="P"> </i><i class="Y">{</i></div>
<div class="num" style="left:17px;top:324px">10</div>
<div class="code" style="left:130px;top:324px">  <i class="K">return</i><i class="P"> </i><i class="O">(</i></div>
<div class="num" style="left:17px;top:360px">11</div>
<div class="code" style="left:130px;top:360px">    <i class="G">&lt;</i><i class="T">BrowserRouter</i><i class="P"> </i><i class="V">basename</i><i class="P">=</i><i class="B">{</i><i class="V">process</i><i class="P">.</i><i class="V">env</i><i class="P">.</i><i class="C">PUBLIC_URL</i><i class="B">}</i><i class="G">&gt;</i></div>
<div class="num" style="left:17px;top:396px">12</div>
<div class="code" style="left:130px;top:396px">      <i class="G">&lt;</i><i class="T">Switch</i><i class="G">&gt;</i></div>
<div class="num" style="left:17px;top:432px">13</div>
<div class="code" style="left:130px;top:432px">        <i class="G">&lt;</i><i class="T">Route</i><i class="P"> </i><i class="V">path</i><i class="P">=</i><i class="Q">&quot;/:coinId&quot;</i><i class="G">&gt;</i></div>
<div class="num" style="left:17px;top:468px">14</div>
<div class="code" style="left:130px;top:468px">          <i class="G">&lt;</i><i class="T">Coin</i><i class="P"> </i><i class="G">/&gt;</i></div>
<div class="num" style="left:17px;top:504px">15</div>
<div class="code" style="left:130px;top:504px">        <i class="G">&lt;/</i><i class="T">Route</i><i class="G">&gt;</i></div>
<div class="num" style="left:17px;top:540px">16</div>
<div class="code" style="left:130px;top:540px">        <i class="G">&lt;</i><i class="T">Route</i><i class="P"> </i><i class="V">path</i><i class="P">=</i><i class="Q">&quot;/&quot;</i><i class="G">&gt;</i></div>
<div class="num" style="left:17px;top:576px">17</div>
<div class="code" style="left:130px;top:576px">          <i class="G">&lt;</i><i class="T">Coins</i><i class="P"> </i><i class="V">toggleDark</i><i class="P">=</i><i class="B">{</i><i class="F">toggleDark</i><i class="B">}</i><i class="P"> </i><i class="G">/&gt;</i></div>
<div class="num" style="left:17px;top:612px">18</div>
<div class="code" style="left:130px;top:612px">        <i class="G">&lt;/</i><i class="T">Route</i><i class="G">&gt;</i></div>
<div class="num" style="left:17px;top:648px">19</div>
<div class="code" style="left:130px;top:648px">      <i class="G">&lt;/</i><i class="T">Switch</i><i class="G">&gt;</i></div>
<div class="num" style="left:17px;top:684px">20</div>
<div class="code" style="left:130px;top:684px">    <i class="G">&lt;/</i><i class="T">BrowserRouter</i><i class="G">&gt;</i></div>
<div class="num" style="left:17px;top:720px">21</div>
<div class="code" style="left:130px;top:720px">  <i class="O">)</i><i class="P">;</i></div>
<div class="num" style="left:17px;top:756px">22</div>
<div class="code" style="left:130px;top:756px"><i class="Y">}</i></div>
</div>
<div class="a" style="left:2596px;top:200px;width:158px;height:4px;background:#264466;"></div>
<div class="a" style="left:2590px;top:124px;width:2.3px;height:20px;background:#3C93C9;"></div>
<div class="a" style="left:2590px;top:172px;width:2.3px;height:4px;background:#3C93C9;"></div>
<div class="a" style="left:2596px;top:108px;width:158px;height:98px;overflow:hidden">
<div class="mm" style="left:0;top:0px"><i class="K">import </i><i class="Y">{ </i><i class="V">BrowserRouter</i><i class="P">, </i><i class="V">Switch</i><i class="P">, </i><i class="V">Route </i><i class="Y">} </i><i class="K">from </i><i class="Q">&quot;react-router-dom&quot;</i><i class="P">;</i></div>
<div class="mm" style="left:0;top:4px"><i class="K">import </i><i class="V">Coin </i><i class="K">from </i><i class="Q">&quot;./routes/Coin&quot;</i><i class="P">;</i></div>
<div class="mm" style="left:0;top:8px"><i class="K">import </i><i class="V">Coins </i><i class="K">from </i><i class="Q">&quot;./routes/Coins&quot;</i><i class="P">;</i></div>
<div class="mm" style="left:0;top:16px"><i class="S">interface </i><i class="T">IRouterProps </i><i class="Y">{</i></div>
<div class="mm" style="left:0;top:20px">  <i class="V">toggleDark</i><i class="P">: </i><i class="O">(</i><i class="O">) </i><i class="S">=&gt; </i><i class="S">void</i><i class="P">;</i></div>
<div class="mm" style="left:0;top:24px"><i class="Y">}</i></div>
<div class="mm" style="left:0;top:32px"><i class="S">function </i><i class="F">Router</i><i class="O">(</i><i class="Y">{ </i><i class="V">toggleDark </i><i class="Y">}</i><i class="P">: </i><i class="T">IRouterProps</i><i class="O">) </i><i class="Y">{</i></div>
<div class="mm" style="left:0;top:36px">  <i class="K">return </i><i class="O">(</i></div>
<div class="mm" style="left:0;top:40px">    <i class="G">&lt;</i><i class="T">BrowserRouter </i><i class="V">basename</i><i class="P">=</i><i class="Y">{</i><i class="V">process</i><i class="P">.</i><i class="V">env</i><i class="P">.</i><i class="C">PUBLIC_URL</i><i class="Y">}</i><i class="G">&gt;</i></div>
<div class="mm" style="left:0;top:44px">      <i class="G">&lt;</i><i class="T">Switch</i><i class="G">&gt;</i></div>
<div class="mm" style="left:0;top:48px">        <i class="G">&lt;</i><i class="T">Route </i><i class="V">path</i><i class="P">=</i><i class="Q">&quot;/:coinId&quot;</i><i class="G">&gt;</i></div>
<div class="mm" style="left:0;top:52px">          <i class="G">&lt;</i><i class="T">Coin </i><i class="G">/</i><i class="G">&gt;</i></div>
<div class="mm" style="left:0;top:56px">        <i class="G">&lt;</i><i class="G">/</i><i class="T">Route</i><i class="G">&gt;</i></div>
<div class="mm" style="left:0;top:60px">        <i class="G">&lt;</i><i class="T">Route </i><i class="V">path</i><i class="P">=</i><i class="Q">&quot;/&quot;</i><i class="G">&gt;</i></div>
<div class="mm" style="left:0;top:64px">          <i class="G">&lt;</i><i class="T">Coins </i><i class="V">toggleDark</i><i class="P">=</i><i class="Y">{</i><i class="V">toggleDark</i><i class="Y">} </i><i class="G">/</i><i class="G">&gt;</i></div>
<div class="mm" style="left:0;top:68px">        <i class="G">&lt;</i><i class="G">/</i><i class="T">Route</i><i class="G">&gt;</i></div>
<div class="mm" style="left:0;top:72px">      <i class="G">&lt;</i><i class="G">/</i><i class="T">Switch</i><i class="G">&gt;</i></div>
<div class="mm" style="left:0;top:76px">    <i class="G">&lt;</i><i class="G">/</i><i class="T">BrowserRouter</i><i class="G">&gt;</i></div>
<div class="mm" style="left:0;top:80px">  <i class="O">)</i><i class="P">;</i></div>
<div class="mm" style="left:0;top:84px"><i class="Y">}</i></div>
<div class="mm" style="left:0;top:92px"><i class="K">export </i><i class="K">default </i><i class="C">Router</i><i class="P">;</i></div>
</div>
<div class="a" style="left:2754px;top:108px;width:1px;height:764px;background:#3C3C3C;"></div>
<div class="a" style="left:2754px;top:108px;width:16px;height:1px;background:#3C3C3C;"></div>
<div class="a" style="left:2755px;top:175.4px;width:9.4px;height:84.6px;background:#2F5670;"></div>
<div class="a" style="left:2755px;top:378px;width:9.4px;height:17.4px;background:#2F5670;"></div>
<div class="a" style="left:2755px;top:493.8px;width:15px;height:4.2px;background:#9A9A9A;"></div>
<div class="a" style="left:1380px;top:872px;width:1390px;height:2px;background:#444444;"></div>
<div class="a" style="left:1380px;top:874px;width:1390px;height:68px;background:#252526;"></div>
<div class="a" style="left:1380px;top:874px;width:260px;height:68px;background:#1E1E1E;"></div>
<svg class="a" style="left:1398px;top:891px" width="32" height="32" viewBox="-16 -16 32 32"><g fill="none" stroke="#4396DD" stroke-width="2.1"><ellipse cx="0" cy="0" rx="13.2" ry="5.2"/><ellipse cx="0" cy="0" rx="13.2" ry="5.2" transform="rotate(60)"/><ellipse cx="0" cy="0" rx="13.2" ry="5.2" transform="rotate(120)"/></g><circle cx="0" cy="0" r="2.4" fill="#4396DD"/></svg>
<div class="ui" style="left:1442.3px;top:889.911px;font-size:27.5px;line-height:34px;color:#E2C08D;">Coins.tsx</div>
<div class="ui" style="left:1563.8px;top:889.911px;font-size:27.5px;line-height:34px;color:#BFA57B;">M</div>
<svg class="a" style="left:1602.7px;top:897.4px" width="19.2" height="19.2"><path d="M1 1 L18.2 18.2 M18.2 1 L1 18.2" stroke="#FFFFFF" stroke-width="1.9" fill="none"/></svg>
<svg class="a" style="left:2616px;top:891px" width="34" height="34" viewBox="0 0 34 34"><g fill="none" stroke="#C5C5C5" stroke-width="2.2"><circle cx="7" cy="7" r="4.3"/><circle cx="25" cy="27" r="4.3"/><path d="M7 11.3 L7 22.5 Q7 27 11.5 27 L17.3 27 M13.1 22.3 L17.3 27 L13.1 31.7"/><path d="M25 22.7 L25 11.5 Q25 7 20.5 7 L14.8 7 M18.8 2.3 L14.8 7 L18.8 11.7"/></g></svg>
<svg class="a" style="left:2671px;top:892px" width="29" height="28" viewBox="0 0 29 28"><g fill="none" stroke="#C5C5C5" stroke-width="2.2"><rect x="1.8" y="1.8" width="24.4" height="24.4" rx="2.5"/><path d="M14 2 L14 26"/></g></svg>
<div class="a" style="left:2723.8px;top:904.8px;width:4.4px;height:4.4px;border-radius:50%;background:#C5C5C5"></div><div class="a" style="left:2733.8px;top:904.8px;width:4.4px;height:4.4px;border-radius:50%;background:#C5C5C5"></div><div class="a" style="left:2743.8px;top:904.8px;width:4.4px;height:4.4px;border-radius:50%;background:#C5C5C5"></div>
<div class="a" style="left:1380px;top:942px;width:1390px;height:44px;background:#1E1E1E;"></div>
<div class="ui" style="left:1411px;top:947.711px;font-size:27.5px;line-height:34px;color:#A9A9A9;">src</div>
<svg class="a" style="left:1458px;top:953.2px" width="14" height="22" viewBox="0 0 14 22"><path d="M1.5 1.5 L11.5 11 L1.5 20.5" fill="none" stroke="#A9A9A9" stroke-width="2"/></svg>
<div class="ui" style="left:1480.3px;top:947.711px;font-size:27.5px;line-height:34px;color:#A9A9A9;">routes</div>
<svg class="a" style="left:1567px;top:953.2px" width="14" height="22" viewBox="0 0 14 22"><path d="M1.5 1.5 L11.5 11 L1.5 20.5" fill="none" stroke="#A9A9A9" stroke-width="2"/></svg>
<svg class="a" style="left:1587.8px;top:947.8px" width="32" height="32" viewBox="-16 -16 32 32"><g fill="none" stroke="#4396DD" stroke-width="2.1"><ellipse cx="0" cy="0" rx="13.2" ry="5.2"/><ellipse cx="0" cy="0" rx="13.2" ry="5.2" transform="rotate(60)"/><ellipse cx="0" cy="0" rx="13.2" ry="5.2" transform="rotate(120)"/></g><circle cx="0" cy="0" r="2.4" fill="#4396DD"/></svg>
<div class="ui" style="left:1632.7px;top:947.711px;font-size:27.5px;line-height:34px;color:#A9A9A9;">Coins.tsx</div>
<svg class="a" style="left:1753.8px;top:953.2px" width="14" height="22" viewBox="0 0 14 22"><path d="M1.5 1.5 L11.5 11 L1.5 20.5" fill="none" stroke="#A9A9A9" stroke-width="2"/></svg>
<div class="ui" style="left:1776px;top:947.711px;font-size:27.5px;line-height:34px;color:#A9A9A9;">...</div>
<div class="a" style="left:1380px;top:986px;width:1208px;height:764px;overflow:hidden">
<div class="a" style="left:130px;top:336.4px;width:1082px;height:36px;border:4px solid #282828"></div>
<div class="hatch" style="left:88px;top:372.4px;height:180px"></div>
<div class="guide" style="left:130px;top:48.4px;height:36px"></div>
<div class="guide" style="left:130px;top:84.4px;height:36px"></div>
<div class="guide" style="left:130px;top:120.4px;height:36px"></div>
<div class="guide" style="left:130px;top:156.4px;height:36px"></div>
<div class="guide" style="left:130px;top:192.4px;height:36px"></div>
<div class="guide" style="left:130px;top:228.4px;height:36px"></div>
<div class="guide" style="left:130px;top:264.4px;height:36px"></div>
<div class="guide" style="left:130px;top:408.4px;height:36px"></div>
<div class="guide" style="left:130px;top:552.4px;height:36px"></div>
<div class="guide" style="left:130px;top:588.4px;height:36px"></div>
<div class="guide" style="left:130px;top:624.4px;height:36px"></div>
<div class="guide" style="left:130px;top:660.4px;height:36px"></div>
<div class="guide" style="left:130px;top:696.4px;height:36px"></div>
<div class="guide" style="left:130px;top:732.4px;height:36px"></div>
<div class="guide" style="left:130px;top:768.4px;height:36px"></div>
<div class="num" style="left:17px;top:-23.6px">56</div>
<div class="num" style="left:17px;top:12.4px">57</div>
<div class="code" style="left:130px;top:12.4px"><i class="S">interface</i><i class="P"> </i><i class="T">CoinInterface</i><i class="P"> </i><i class="Y">{</i></div>
<div class="num" style="left:17px;top:48.4px">58</div>
<div class="code" style="left:130px;top:48.4px">  <i class="V">id</i><i class="P">: </i><i class="T">string</i><i class="P">;</i></div>
<div class="num" style="left:17px;top:84.4px">59</div>
<div class="code" style="left:130px;top:84.4px">  <i class="V">name</i><i class="P">: </i><i class="T">string</i><i class="P">;</i></div>
<div class="num" style="left:17px;top:120.4px">60</div>
<div class="code" style="left:130px;top:120.4px">  <i class="V">symbol</i><i class="P">: </i><i class="T">string</i><i class="P">;</i></div>
<div class="num" style="left:17px;top:156.4px">61</div>
<div class="code" style="left:130px;top:156.4px">  <i class="V">rank</i><i class="P">: </i><i class="T">number</i><i class="P">;</i></div>
<div class="num" style="left:17px;top:192.4px">62</div>
<div class="code" style="left:130px;top:192.4px">  <i class="V">is_new</i><i class="P">: </i><i class="T">boolean</i><i class="P">;</i></div>
<div class="num" style="left:17px;top:228.4px">63</div>
<div class="code" style="left:130px;top:228.4px">  <i class="V">is_active</i><i class="P">: </i><i class="T">boolean</i><i class="P">;</i></div>
<div class="num" style="left:17px;top:264.4px">64</div>
<div class="code" style="left:130px;top:264.4px">  <i class="V">type</i><i class="P">: </i><i class="T">string</i><i class="P">;</i></div>
<div class="num" style="left:17px;top:300.4px">65</div>
<div class="code" style="left:130px;top:300.4px"><i class="Y">}</i></div>
<div class="num cur" style="left:17px;top:336.4px">66</div>
<div class="num" style="left:17px;top:372.4px">67</div>
<div class="code" style="left:130px;top:372.4px"><i class="S">interface</i><i class="P"> </i><i class="T">IcoinProps</i><i class="P"> </i><i class="Y">{</i></div>
<div class="num" style="left:17px;top:408.4px">68</div>
<div class="code" style="left:130px;top:408.4px">  <i class="F">toggleDark</i><i class="P">: </i><i class="O">()</i><i class="P"> </i><i class="S">=&gt;</i><i class="P"> </i><i class="T">void</i><i class="P">;</i></div>
<div class="num" style="left:17px;top:444.4px">69</div>
<div class="code" style="left:130px;top:444.4px"><i class="Y">}</i></div>
<div class="num" style="left:17px;top:480.4px">70</div>
<div class="num" style="left:17px;top:516.4px">71</div>
<div class="code" style="left:130px;top:516.4px"><i class="S">function</i><i class="P"> </i><i class="F">Coins</i><i class="Y">(</i><i class="O">{</i><i class="P"> </i><i class="F">toggleDark</i><i class="P"> </i><i class="O">}</i><i class="P">: </i><i class="T">IcoinProps</i><i class="Y">)</i><i class="P"> </i><i class="Y">{</i></div>
<div class="num" style="left:17px;top:552.4px">72</div>
<div class="code" style="left:130px;top:552.4px">  <i class="S">const</i><i class="P"> </i><i class="O">{</i><i class="P"> </i><i class="C">isLoading</i><i class="P">, </i><i class="C">data</i><i class="P"> </i><i class="O">}</i><i class="P"> = </i><i class="F">useQuery</i><i class="O">&lt;</i><i class="T">CoinInterface</i><i class="B">[]</i><i class="O">&gt;(</i><i class="Q">&quot;allCoins&quot;</i><i class="P">, </i><i class="F">fetchCoins</i><i class="O">)</i><i class="P">;</i></div>
<div class="num" style="left:17px;top:588.4px">73</div>
<div class="code" style="left:130px;top:588.4px">  <i class="V">console</i><i class="P">.</i><i class="F">log</i><i class="O">(</i><i class="Q">&quot;isLoading&quot;</i><i class="P">, </i><i class="C">isLoading</i><i class="O">)</i><i class="P">;</i></div>
<div class="num" style="left:17px;top:624.4px">74</div>
<div class="code" style="left:130px;top:624.4px">  <i class="V">console</i><i class="P">.</i><i class="F">log</i><i class="O">(</i><i class="Q">&quot;data&quot;</i><i class="P">, </i><i class="C">data</i><i class="O">)</i><i class="P">;</i></div>
<div class="num" style="left:17px;top:660.4px">75</div>
<div class="code" style="left:130px;top:660.4px">  <i class="M">// const [coins, setCoins] = useState&lt;CoinInterface[]&gt;([]);</i></div>
<div class="num" style="left:17px;top:696.4px">76</div>
<div class="code" style="left:130px;top:696.4px">  <i class="M">// const [loading, setLoading] = useState(true);</i></div>
<div class="num" style="left:17px;top:732.4px">77</div>
<div class="num" style="left:17px;top:768.4px">78</div>
<div class="code" style="left:130px;top:768.4px">  <i class="M">// useEffect(() =&gt; {</i></div>
</div>
<div class="a" style="left:1380px;top:986px;width:1208px;height:8px;background:linear-gradient(rgba(0,0,0,0.55),rgba(0,0,0,0));"></div>
<div class="a" style="left:2576px;top:986px;width:12px;height:764px;background:linear-gradient(90deg,rgba(0,0,0,0),rgba(0,0,0,0.38));"></div>
<div class="a" style="left:2596px;top:1245.5px;width:158px;height:4px;background:#264466;"></div>
<div class="a" style="left:2590px;top:1249.5px;width:2.3px;height:12px;background:#3C93C9;"></div>
<div class="a" style="left:2590px;top:1265.5px;width:2.3px;height:4px;background:#3C93C9;"></div>
<div class="a" style="left:2590px;top:1357.5px;width:2.3px;height:4px;background:#5A9E2A;"></div>
<div class="a" style="left:2596px;top:985.5px;width:158px;height:474px;overflow:hidden">
<div class="mm" style="left:0;top:0px"><i class="K">import </i><i class="Y">{ </i><i class="V">Helmet </i><i class="Y">} </i><i class="K">from </i><i class="Q">&quot;react-helmet&quot;</i><i class="P">;</i></div>
<div class="mm" style="left:0;top:4px"><i class="K">import </i><i class="Y">{ </i><i class="V">useQuery </i><i class="Y">} </i><i class="K">from </i><i class="Q">&quot;react-query&quot;</i><i class="P">;</i></div>
<div class="mm" style="left:0;top:8px"><i class="K">import </i><i class="Y">{ </i><i class="V">Link </i><i class="Y">} </i><i class="K">from </i><i class="Q">&quot;react-router-dom&quot;</i><i class="P">;</i></div>
<div class="mm" style="left:0;top:12px"><i class="K">import </i><i class="V">styled </i><i class="K">from </i><i class="Q">&quot;styled-components&quot;</i><i class="P">;</i></div>
<div class="mm" style="left:0;top:16px"><i class="K">import </i><i class="Y">{ </i><i class="V">fetchCoins </i><i class="Y">} </i><i class="K">from </i><i class="Q">&quot;../api&quot;</i><i class="P">;</i></div>
<div class="mm" style="left:0;top:24px"><i class="S">const </i><i class="C">Container </i><i class="P">= </i><i class="V">styled</i><i class="P">.</i><i class="F">div</i><i class="Q">`</i></div>
<div class="mm" style="left:0;top:28px">  <i class="V">padding</i><i class="P">:</i><i class="N"> 0px 20px;</i></div>
<div class="mm" style="left:0;top:32px">  <i class="V">max-width</i><i class="P">:</i><i class="N"> 480px;</i></div>
<div class="mm" style="left:0;top:36px">  <i class="V">margin</i><i class="P">:</i><i class="N"> 0 auto;</i></div>
<div class="mm" style="left:0;top:40px"><i class="Q">`</i><i class="P">;</i></div>
<div class="mm" style="left:0;top:48px"><i class="S">const </i><i class="C">Header </i><i class="P">= </i><i class="V">styled</i><i class="P">.</i><i class="F">header</i><i class="Q">`</i></div>
<div class="mm" style="left:0;top:52px">  <i class="V">height</i><i class="P">:</i><i class="N"> 15vh;</i></div>
<div class="mm" style="left:0;top:56px">  <i class="V">display</i><i class="P">:</i><i class="Q"> flex;</i></div>
<div class="mm" style="left:0;top:60px">  <i class="V">justify-content</i><i class="P">:</i><i class="Q"> center;</i></div>
<div class="mm" style="left:0;top:64px">  <i class="V">align-items</i><i class="P">:</i><i class="Q"> center;</i></div>
<div class="mm" style="left:0;top:68px"><i class="Q">`</i><i class="P">;</i></div>
<div class="mm" style="left:0;top:76px"><i class="S">const </i><i class="C">CoinList </i><i class="P">= </i><i class="V">styled</i><i class="P">.</i><i class="V">ul</i><i class="Q">``</i><i class="P">;</i></div>
<div class="mm" style="left:0;top:84px"><i class="S">const </i><i class="C">Coin </i><i class="P">= </i><i class="V">styled</i><i class="P">.</i><i class="F">li</i><i class="Q">`</i></div>
<div class="mm" style="left:0;top:88px">  <i class="V">background-color</i><i class="P">: </i><i class="V">$</i><i class="Y">{</i><i class="O">(</i><i class="V">props</i><i class="O">) </i><i class="S">=&gt; </i><i class="V">props</i><i class="P">.</i><i class="V">theme</i><i class="P">.</i><i class="V">boxColor</i><i class="Y">}</i><i class="P">;</i></div>
<div class="mm" style="left:0;top:92px">  <i class="V">color</i><i class="P">: </i><i class="V">$</i><i class="Y">{</i><i class="O">(</i><i class="V">props</i><i class="O">) </i><i class="S">=&gt; </i><i class="V">props</i><i class="P">.</i><i class="V">theme</i><i class="P">.</i><i class="V">textColor</i><i class="Y">}</i><i class="P">;</i></div>
<div class="mm" style="left:0;top:96px">  <i class="V">border-radius</i><i class="P">:</i><i class="N"> 15px;</i></div>
<div class="mm" style="left:0;top:100px">  <i class="V">margin-bottom</i><i class="P">:</i><i class="N"> 10px;</i></div>
<div class="mm" style="left:0;top:104px">  <i class="L">a {</i></div>
<div class="mm" style="left:0;top:108px">    <i class="V">display</i><i class="P">:</i><i class="Q"> flex;</i></div>
<div class="mm" style="left:0;top:112px">    <i class="V">align-items</i><i class="P">:</i><i class="Q"> center;</i></div>
<div class="mm" style="left:0;top:116px">    <i class="V">padding</i><i class="P">:</i><i class="N"> 20px;</i></div>
<div class="mm" style="left:0;top:120px">    <i class="V">transition</i><i class="P">:</i><i class="N"> color 0.2s ease-in;</i></div>
<div class="mm" style="left:0;top:124px">  <i class="Y">}</i></div>
<div class="mm" style="left:0;top:128px">  <i class="L">&amp;:hover {</i></div>
<div class="mm" style="left:0;top:132px">    <i class="L">a {</i></div>
<div class="mm" style="left:0;top:136px">      <i class="V">color</i><i class="P">: </i><i class="V">$</i><i class="Y">{</i><i class="O">(</i><i class="V">props</i><i class="O">) </i><i class="S">=&gt; </i><i class="V">props</i><i class="P">.</i><i class="V">theme</i><i class="P">.</i><i class="V">accentColor</i><i class="Y">}</i><i class="P">;</i></div>
<div class="mm" style="left:0;top:140px">    <i class="Y">}</i></div>
<div class="mm" style="left:0;top:144px">  <i class="Y">}</i></div>
<div class="mm" style="left:0;top:148px"><i class="Q">`</i><i class="P">;</i></div>
<div class="mm" style="left:0;top:156px"><i class="S">const </i><i class="C">Title </i><i class="P">= </i><i class="V">styled</i><i class="P">.</i><i class="F">h1</i><i class="Q">`</i></div>
<div class="mm" style="left:0;top:160px">  <i class="V">font-size</i><i class="P">:</i><i class="N"> 48px;</i></div>
<div class="mm" style="left:0;top:164px">  <i class="V">font-weight</i><i class="P">:</i><i class="N"> 600;</i></div>
<div class="mm" style="left:0;top:168px">  <i class="V">color</i><i class="P">: </i><i class="V">$</i><i class="Y">{</i><i class="O">(</i><i class="V">props</i><i class="O">) </i><i class="S">=&gt; </i><i class="V">props</i><i class="P">.</i><i class="V">theme</i><i class="P">.</i><i class="V">accentColor</i><i class="Y">}</i><i class="P">;</i></div>
<div class="mm" style="left:0;top:172px"><i class="Q">`</i><i class="P">;</i></div>
<div class="mm" style="left:0;top:180px"><i class="S">const </i><i class="C">Loader </i><i class="P">= </i><i class="V">styled</i><i class="P">.</i><i class="F">span</i><i class="Q">`</i></div>
<div class="mm" style="left:0;top:184px">  <i class="V">text-align</i><i class="P">:</i><i class="Q"> center;</i></div>
<div class="mm" style="left:0;top:188px">  <i class="V">display</i><i class="P">:</i><i class="Q"> block;</i></div>
<div class="mm" style="left:0;top:192px"><i class="Q">`</i><i class="P">;</i></div>
<div class="mm" style="left:0;top:200px"><i class="S">const </i><i class="C">Img </i><i class="P">= </i><i class="V">styled</i><i class="P">.</i><i class="F">img</i><i class="Q">`</i></div>
<div class="mm" style="left:0;top:204px">  <i class="V">width</i><i class="P">:</i><i class="N"> 35px;</i></div>
<div class="mm" style="left:0;top:208px">  <i class="V">height</i><i class="P">:</i><i class="N"> 35px;</i></div>
<div class="mm" style="left:0;top:212px">  <i class="V">margin-right</i><i class="P">:</i><i class="N"> 10px;</i></div>
<div class="mm" style="left:0;top:216px"><i class="Q">`</i><i class="P">;</i></div>
<div class="mm" style="left:0;top:224px"><i class="S">interface </i><i class="T">CoinInterface </i><i class="Y">{</i></div>
<div class="mm" style="left:0;top:228px">  <i class="V">id</i><i class="P">: </i><i class="T">string</i><i class="P">;</i></div>
<div class="mm" style="left:0;top:232px">  <i class="V">name</i><i class="P">: </i><i class="T">string</i><i class="P">;</i></div>
<div class="mm" style="left:0;top:236px">  <i class="V">symbol</i><i class="P">: </i><i class="T">string</i><i class="P">;</i></div>
<div class="mm" style="left:0;top:240px">  <i class="V">rank</i><i class="P">: </i><i class="T">number</i><i class="P">;</i></div>
<div class="mm" style="left:0;top:244px">  <i class="V">is_new</i><i class="P">: </i><i class="T">boolean</i><i class="P">;</i></div>
<div class="mm" style="left:0;top:248px">  <i class="V">is_active</i><i class="P">: </i><i class="T">boolean</i><i class="P">;</i></div>
<div class="mm" style="left:0;top:252px">  <i class="V">type</i><i class="P">: </i><i class="T">string</i><i class="P">;</i></div>
<div class="mm" style="left:0;top:256px"><i class="Y">}</i></div>
<div class="mm" style="left:0;top:264px"><i class="S">interface </i><i class="T">IcoinProps </i><i class="Y">{</i></div>
<div class="mm" style="left:0;top:268px">  <i class="V">toggleDark</i><i class="P">: </i><i class="O">(</i><i class="O">) </i><i class="S">=&gt; </i><i class="S">void</i><i class="P">;</i></div>
<div class="mm" style="left:0;top:272px"><i class="Y">}</i></div>
<div class="mm" style="left:0;top:280px"><i class="S">function </i><i class="F">Coins</i><i class="O">(</i><i class="Y">{ </i><i class="V">toggleDark </i><i class="Y">}</i><i class="P">: </i><i class="T">IcoinProps</i><i class="O">) </i><i class="Y">{</i></div>
<div class="mm" style="left:0;top:284px">  <i class="S">const </i><i class="Y">{ </i><i class="V">isLoading</i><i class="P">, </i><i class="V">data </i><i class="Y">} </i><i class="P">= </i><i class="V">useQuery</i><i class="G">&lt;</i><i class="T">CoinInterface</i><i class="O">[</i><i class="O">]</i><i class="G">&gt;</i><i class="O">(</i><i class="Q">&quot;allCoins&quot;</i><i class="P">, </i><i class="V">fetchCoins</i><i class="O">)</i><i class="P">;</i></div>
<div class="mm" style="left:0;top:288px">  <i class="V">console</i><i class="P">.</i><i class="F">log</i><i class="O">(</i><i class="Q">&quot;isLoading&quot;</i><i class="P">, </i><i class="V">isLoading</i><i class="O">)</i><i class="P">;</i></div>
<div class="mm" style="left:0;top:292px">  <i class="V">console</i><i class="P">.</i><i class="F">log</i><i class="O">(</i><i class="Q">&quot;data&quot;</i><i class="P">, </i><i class="V">data</i><i class="O">)</i><i class="P">;</i></div>
<div class="mm" style="left:0;top:296px">  <i class="M">// const [coins, setCoins] = useState&lt;CoinInterface[]&gt;([]);</i></div>
<div class="mm" style="left:0;top:300px">  <i class="M">// const [loading, setLoading] = useState(true);</i></div>
<div class="mm" style="left:0;top:308px">  <i class="M">// useEffect(() =&gt; {</i></div>
<div class="mm" style="left:0;top:312px">  <i class="M">//   (async () =&gt; {</i></div>
<div class="mm" style="left:0;top:316px">  <i class="M">//     const response = await fetch(&quot;htps//api.coinpaprika.com/v1/coins&quot;);</i></div>
<div class="mm" style="left:0;top:320px">  <i class="M">//     const json = await response.json();</i></div>
<div class="mm" style="left:0;top:324px">  <i class="M">//     setCoins(json.slice(0, 100));</i></div>
<div class="mm" style="left:0;top:328px">  <i class="M">//     setLoading(false);</i></div>
<div class="mm" style="left:0;top:332px">  <i class="M">//   })();</i></div>
<div class="mm" style="left:0;top:336px">  <i class="M">// }, []);</i></div>
<div class="mm" style="left:0;top:344px">  <i class="K">return </i><i class="O">(</i></div>
<div class="mm" style="left:0;top:348px">    <i class="G">&lt;</i><i class="T">Container</i><i class="G">&gt;</i></div>
<div class="mm" style="left:0;top:352px">      <i class="G">&lt;</i><i class="T">Helmet</i><i class="G">&gt;</i></div>
<div class="mm" style="left:0;top:356px">        <i class="G">&lt;</i><i class="T">title</i><i class="G">&gt;</i><i class="C">Coin</i><i class="G">&lt;</i><i class="G">/</i><i class="T">title</i><i class="G">&gt;</i></div>
<div class="mm" style="left:0;top:360px">      <i class="G">&lt;</i><i class="G">/</i><i class="T">Helmet</i><i class="G">&gt;</i></div>
<div class="mm" style="left:0;top:364px">      <i class="G">&lt;</i><i class="T">Header</i><i class="G">&gt;</i></div>
<div class="mm" style="left:0;top:368px">        <i class="G">&lt;</i><i class="T">Title</i><i class="G">&gt;</i><i class="C">Coin</i><i class="G">&lt;</i><i class="G">/</i><i class="T">Title</i><i class="G">&gt;</i></div>
<div class="mm" style="left:0;top:372px">        <i class="G">&lt;</i><i class="T">button </i><i class="V">onClick</i><i class="P">=</i><i class="Y">{</i><i class="V">toggleDark</i><i class="Y">}</i><i class="G">&gt;</i><i class="C">Toggle </i><i class="C">Dark </i><i class="C">Mode</i><i class="G">&lt;</i><i class="G">/</i><i class="T">button</i><i class="G">&gt;</i></div>
<div class="mm" style="left:0;top:376px">      <i class="G">&lt;</i><i class="G">/</i><i class="T">Header</i><i class="G">&gt;</i></div>
<div class="mm" style="left:0;top:380px">      <i class="Y">{</i><i class="V">isLoading </i><i class="P">? </i><i class="O">(</i></div>
<div class="mm" style="left:0;top:384px">        <i class="G">&lt;</i><i class="T">Loader</i><i class="G">&gt;</i><i class="Q">&quot;Loading...&quot;</i><i class="G">&lt;</i><i class="G">/</i><i class="T">Loader</i><i class="G">&gt;</i></div>
<div class="mm" style="left:0;top:388px">      <i class="O">) </i><i class="P">: </i><i class="O">(</i></div>
<div class="mm" style="left:0;top:392px">        <i class="G">&lt;</i><i class="T">CoinList</i><i class="G">&gt;</i></div>
<div class="mm" style="left:0;top:396px">          <i class="Y">{</i><i class="V">data</i><i class="P">?</i><i class="P">.</i><i class="F">slice</i><i class="O">(</i><i class="P">0</i><i class="P">, </i><i class="P">1</i><i class="P">0</i><i class="P">0</i><i class="O">)</i><i class="P">.</i><i class="F">map</i><i class="O">(</i><i class="O">(</i><i class="V">coin</i><i class="O">) </i><i class="S">=&gt; </i><i class="O">(</i></div>
<div class="mm" style="left:0;top:400px">            <i class="G">&lt;</i><i class="T">Coin </i><i class="V">key</i><i class="P">=</i><i class="Y">{</i><i class="V">coin</i><i class="P">.</i><i class="V">id</i><i class="Y">}</i><i class="G">&gt;</i></div>
<div class="mm" style="left:0;top:404px">              <i class="G">&lt;</i><i class="T">Link</i></div>
<div class="mm" style="left:0;top:408px">                <i class="V">to</i><i class="P">=</i><i class="Y">{</i><i class="Y">{ </i><i class="V">pathname</i><i class="P">: </i><i class="Q">`/${coin.id}`</i><i class="P">, </i><i class="V">state</i><i class="P">: </i><i class="Y">{ </i><i class="V">name</i><i class="P">: </i><i class="V">coin</i><i class="P">.</i><i class="V">name </i><i class="Y">} </i><i class="Y">}</i><i class="Y">}</i></div>
<div class="mm" style="left:0;top:412px">              <i class="G">&gt;</i></div>
<div class="mm" style="left:0;top:416px">                <i class="G">&lt;</i><i class="T">Img</i></div>
<div class="mm" style="left:0;top:420px">                  <i class="V">src</i><i class="P">=</i><i class="Y">{</i><i class="Q">`htps//cryptocurrencyliveprices.com/img/${coin.id}.png`</i><i class="Y">}</i></div>
<div class="mm" style="left:0;top:424px">                <i class="G">/</i><i class="G">&gt;</i></div>
<div class="mm" style="left:0;top:428px">                <i class="Y">{</i><i class="V">coin</i><i class="P">.</i><i class="V">name</i><i class="Y">} </i><i class="P">&amp;</i><i class="V">rarr</i><i class="P">;</i></div>
<div class="mm" style="left:0;top:432px">              <i class="G">&lt;</i><i class="G">/</i><i class="T">Link</i><i class="G">&gt;</i></div>
<div class="mm" style="left:0;top:436px">            <i class="G">&lt;</i><i class="G">/</i><i class="T">Coin</i><i class="G">&gt;</i></div>
<div class="mm" style="left:0;top:440px">          <i class="O">)</i><i class="O">)</i><i class="Y">}</i></div>
<div class="mm" style="left:0;top:444px">        <i class="G">&lt;</i><i class="G">/</i><i class="T">CoinList</i><i class="G">&gt;</i></div>
<div class="mm" style="left:0;top:448px">      <i class="O">)</i><i class="Y">}</i></div>
<div class="mm" style="left:0;top:452px">    <i class="G">&lt;</i><i class="G">/</i><i class="T">Container</i><i class="G">&gt;</i></div>
<div class="mm" style="left:0;top:456px">  <i class="O">)</i><i class="P">;</i></div>
<div class="mm" style="left:0;top:460px"><i class="Y">}</i></div>
<div class="mm" style="left:0;top:468px"><i class="K">export </i><i class="K">default </i><i class="C">Coins</i><i class="P">;</i></div>
</div>
<div class="a" style="left:2754px;top:986px;width:1px;height:764px;background:#3C3C3C;"></div>
<div class="a" style="left:2755px;top:1340px;width:15px;height:3.3px;background:#9A9A9A;"></div>
<div class="a" style="left:2755.6px;top:1348px;width:8.2px;height:25.8px;background:#2F5670;"></div>
<div class="a" style="left:0px;top:1750px;width:2770px;height:2px;background:#3A7BC8;"></div>
<svg class="a" style="left:0;top:0" width="2770" height="1752" viewBox="0 0 2770 1752"><g fill="none" stroke="#F4B5B0" stroke-width="6.2" stroke-linecap="round"><rect x="236" y="939.9" width="617.7" height="37.1" rx="18"/><rect x="1491" y="236" width="400.7" height="115" rx="24"/><rect x="1748.9" y="679.1" width="349.7" height="49" rx="23"/><rect x="1498.1" y="1342.95" width="379.8" height="124.95" rx="23"/><path id="arr1" d="M852.1 952.0 L856.0 945.0 C991.5 702.6 1278.1 259.6 1775.6 386.0"/><path d="M2006 730 L1911.5 1462"/></g><g fill="#F4B5B0"><path d="M1804.7 393.7 L1779.4 371.9 L1771 401.3 Z"/><path d="M1904 1491.8 L1892.8 1460.2 L1922.9 1463.7 Z"/></g></svg></div></body></html>
